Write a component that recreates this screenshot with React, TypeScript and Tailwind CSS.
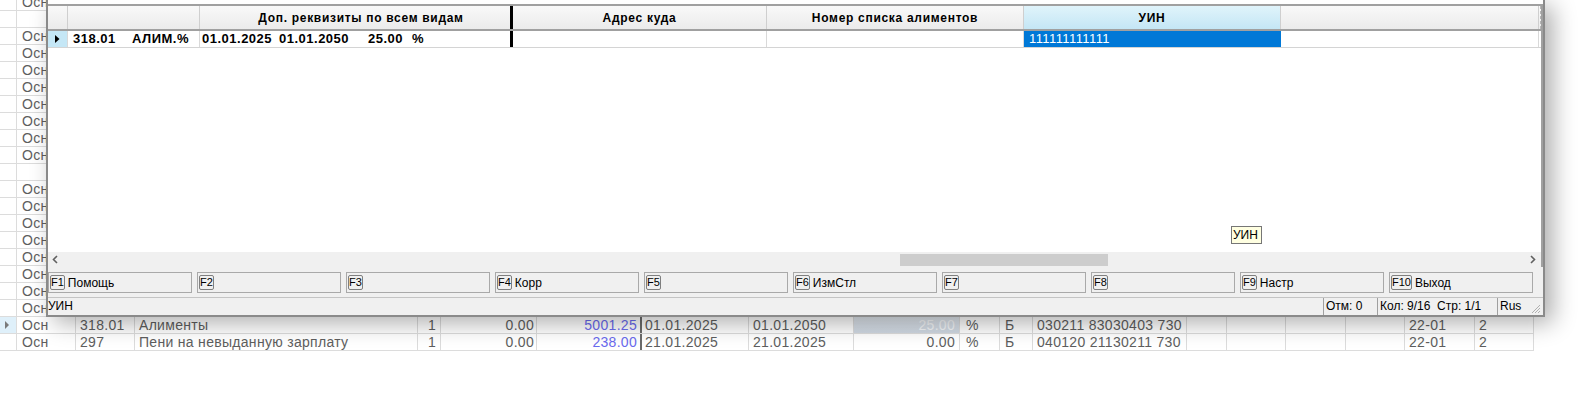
import React from "react";

const bgCell = [
  "w-[59px] pl-[5px]",
  "w-[59px] pl-[4px]",
  "w-[283px] pl-[4px]",
  "w-[23px] pr-[4px] text-right",
  "w-[96px] pr-[2px] text-right",
  "w-[105px] pr-[3px] text-right text-[#6a6aee] border-r-2 border-r-[#6b6b6b]",
  "w-[107px] pl-[3px]",
  "w-[105px] pl-[4px]",
  "w-[106px] pr-[4px] text-right",
  "w-[40px] pl-[6px]",
  "w-[33px] pl-[5px]",
  "w-[154px] pl-[4px]",
  "w-[40px]",
  "w-[59px]",
  "w-[60px]",
  "w-[59px]",
  "w-[70px] pl-[4px]",
  "w-[59px] pl-[4px]",
];

const emptyRow = Array(18).fill("");
const oshRow = ["Осн", ...Array(17).fill("")];

const bgRows: { cells: string[]; selected?: boolean }[] = [
  { cells: oshRow },
  { cells: emptyRow },
  { cells: oshRow },
  { cells: oshRow },
  { cells: oshRow },
  { cells: oshRow },
  { cells: oshRow },
  { cells: oshRow },
  { cells: oshRow },
  { cells: oshRow },
  { cells: emptyRow },
  { cells: oshRow },
  { cells: oshRow },
  { cells: oshRow },
  { cells: oshRow },
  { cells: oshRow },
  { cells: oshRow },
  { cells: oshRow },
  { cells: oshRow },
  {
    selected: true,
    cells: ["Осн", "318.01", "Алименты", "1", "0.00", "5001.25", "01.01.2025", "01.01.2050", "25.00", "%", "Б", "030211 83030403 730", "", "", "", "", "22-01", "2"],
  },
  {
    cells: ["Осн", "297", "Пени на невыданную зарплату", "1", "0.00", "238.00", "21.01.2025", "21.01.2025", "0.00", "%", "Б", "040120 21130211 730", "", "", "", "", "22-01", "2"],
  },
];

function BgRow({ cells, selected }: { cells: string[]; selected?: boolean }) {
  return (
    <div className="flex h-[17px] w-[1534px] border-b border-[#dcdcdc] text-[14px] leading-[16px] tracking-[0.3px] text-[#5e5e5e]">
      <div
        className={`w-[17px] shrink-0 border-r border-[#dcdcdc] flex items-center pl-[5px] ${
          selected ? "bg-[#dff0fa]" : ""
        }`}
      >
        {selected && (
          <svg width="5" height="8" viewBox="0 0 5 8">
            <polygon points="0,0 4,4 0,8" fill="#7a7a7a" />
          </svg>
        )}
      </div>
      {cells.map((c, i) => (
        <div
          key={i}
          className={`shrink-0 border-r border-[#dcdcdc] overflow-hidden whitespace-nowrap ${bgCell[i]} ${
            selected && i === 8 ? "bg-linear-to-b from-[#e2e8ef] to-[#cfd8e2] text-[#f6f8fa]" : ""
          }`}
        >
          {c}
        </div>
      ))}
    </div>
  );
}

const hdr =
  "shrink-0 h-full flex items-center justify-center border-r border-[#cfcfcf] font-bold text-[12px] tracking-[0.7px] text-black";
const hdrBg = "bg-linear-to-b from-[#f9f9f9] to-[#ebebeb]";
const cell = "shrink-0 h-full flex items-center border-r border-[#d9d9d9] text-[12px] text-black";

function FKey({ k, label }: { k: string; label?: string }) {
  return (
    <div className="w-[144px] h-[21px] shrink-0 border border-[#a9a9a9] bg-[#f0f0f0] flex items-center pl-[1px]">
      <span className="h-[15px] border border-[#7f7f7f] rounded-[2px] text-[11px] leading-[13px] text-black flex items-center">
        {k}
      </span>
      {label && <span className="ml-[3px] text-[12px] leading-[14px] text-black">{label}</span>}
    </div>
  );
}

function Chevron({ dir }: { dir: "l" | "r" }) {
  return (
    <svg width="6" height="9" viewBox="0 0 6 9">
      <polyline
        points={dir === "l" ? "5,1 1.5,4.5 5,8" : "1,1 4.5,4.5 1,8"}
        fill="none"
        stroke="#606060"
        strokeWidth="1.6"
      />
    </svg>
  );
}

function Dialog() {
  return (
    <div className="absolute left-[46px] top-0 w-[1499px] h-[317px] bg-[#f0f0f0] border-x-2 border-b-2 border-[#8a8a8a] shadow-[8px_6px_22px_rgba(0,0,0,0.32)] flex flex-col font-['Liberation_Sans',Arial,sans-serif]">
      <div className="h-[4px] bg-white shrink-0" />
      {/* grid */}
      <div className="h-[263px] shrink-0 flex flex-col border-t-2 border-r-2 border-[#a0a0a0] bg-white">
        {/* header */}
        <div className="flex h-[25px] shrink-0 border-b-2 border-[#a0a0a0]">
          <div className={`${hdr} ${hdrBg} w-[20px]`} />
          <div className={`${hdr} ${hdrBg} w-[132px]`} />
          <div className={`${hdr} ${hdrBg} w-[313px] border-r-[3px] border-r-black pl-[12px]`}>
            Доп. реквизиты по всем видам
          </div>
          <div className={`${hdr} ${hdrBg} w-[254px]`}>Адрес куда</div>
          <div className={`${hdr} ${hdrBg} w-[257px]`}>Номер списка алиментов</div>
          <div className={`${hdr} w-[257px] bg-linear-to-b from-[#e0f4fb] to-[#c4e6f5]`}>УИН</div>
          <div className={`${hdr} ${hdrBg} w-[258px]`} />
          <div className={`w-[2px] shrink-0 h-full ${hdrBg} flex justify-end`}>
            <div className="w-0 h-full border-l border-dashed border-[#b5b5b5]" />
          </div>
        </div>
        {/* data row */}
        <div className="flex h-[17px] shrink-0 border-b border-[#d4d4d4]">
          <div className={`${cell} w-[20px] bg-[#c5e7f6] pl-[7px]`}>
            <svg width="5" height="8" viewBox="0 0 5 8">
              <polygon points="0,0 4.5,4 0,8" fill="#000" />
            </svg>
          </div>
          <div className={`${cell} w-[132px] font-bold text-[13px] tracking-[0.5px] pl-[5px] whitespace-nowrap`}>
            <span className="w-[59px] shrink-0">318.01</span>
            <span>АЛИМ.%</span>
          </div>
          <div
            className={`${cell} w-[313px] border-r-[3px] border-r-black font-bold text-[13px] tracking-[0.5px] pl-[2px] whitespace-nowrap`}
          >
            <span className="w-[77px] shrink-0">01.01.2025</span>
            <span className="w-[89px] shrink-0">01.01.2050</span>
            <span className="w-[44px] shrink-0">25.00</span>
            <span>%</span>
          </div>
          <div className={`${cell} w-[254px]`} />
          <div className={`${cell} w-[257px]`} />
          <div className={`${cell} w-[257px] bg-[#0078d7] text-white text-[13px] tracking-[0.4px] pl-[5px] border-r-[#0078d7]`}>
            111111111111
          </div>
          <div className={`${cell} w-[258px]`} />
          <div className="w-[2px] shrink-0" />
        </div>
        {/* empty area */}
        <div className="relative flex-1 bg-white">
          <div className="absolute left-[1183px] top-[178px] w-[31px] h-[18px] border border-[#767676] bg-[#ffffe1] text-[12px] leading-[16px] text-black pl-[1px]">
            УИН
          </div>
        </div>
        {/* scrollbar */}
        <div className="h-[15px] shrink-0 flex items-center bg-[#f0f0f0]">
          <div className="w-[17px] h-full shrink-0 flex items-center pl-[4px]">
            <Chevron dir="l" />
          </div>
          <div className="flex-1 h-full flex items-center">
            <div className="ml-[835px] w-[208px] h-[12px] bg-[#cdcdcd]" />
          </div>
          <div className="w-[17px] h-full shrink-0 flex items-center pl-[6px]">
            <Chevron dir="r" />
          </div>
        </div>
      </div>
      {/* buttons */}
      <div className="flex gap-[5px] pt-[5px] shrink-0">
        <FKey k="F1" label="Помощь" />
        <FKey k="F2" />
        <FKey k="F3" />
        <FKey k="F4" label="Корр" />
        <FKey k="F5" />
        <FKey k="F6" label="ИзмСтл" />
        <FKey k="F7" />
        <FKey k="F8" />
        <FKey k="F9" label="Настр" />
        <FKey k="F10" label="Выход" />
      </div>
      <div className="h-[4px] shrink-0" />
      {/* status bar */}
      <div className="h-[18px] shrink-0 flex border-t border-[#c4c4c4] text-[12px] leading-[17px] text-black">
        <div className="flex-1">УИН</div>
        <div className="w-[54px] shrink-0 border-l border-[#a0a0a0] pl-[2px]">Отм: 0</div>
        <div className="w-[120px] shrink-0 border-l border-[#a0a0a0] pl-[2px] whitespace-pre">Кол: 9/16  Стр: 1/1</div>
        <div className="w-[46px] shrink-0 border-l border-[#a0a0a0] pl-[2px] relative">
          Rus
          <svg className="absolute right-[2px] bottom-[1px]" width="11" height="11" viewBox="0 0 11 11">
            <line x1="10" y1="2" x2="2" y2="10" stroke="#b0b0b0" strokeWidth="1" />
            <line x1="10" y1="5" x2="5" y2="10" stroke="#b0b0b0" strokeWidth="1" />
            <line x1="10" y1="8" x2="8" y2="10" stroke="#b0b0b0" strokeWidth="1" />
          </svg>
        </div>
      </div>
    </div>
  );
}

export default function App() {
  return (
    <div className="relative w-[1592px] h-[396px] overflow-hidden bg-white font-['Liberation_Sans',Arial,sans-serif]">
      <div className="-mt-[6px] flex flex-col">
        {bgRows.map((r, i) => (
          <BgRow key={i} cells={r.cells} selected={r.selected} />
        ))}
      </div>
      <Dialog />
    </div>
  );
}
